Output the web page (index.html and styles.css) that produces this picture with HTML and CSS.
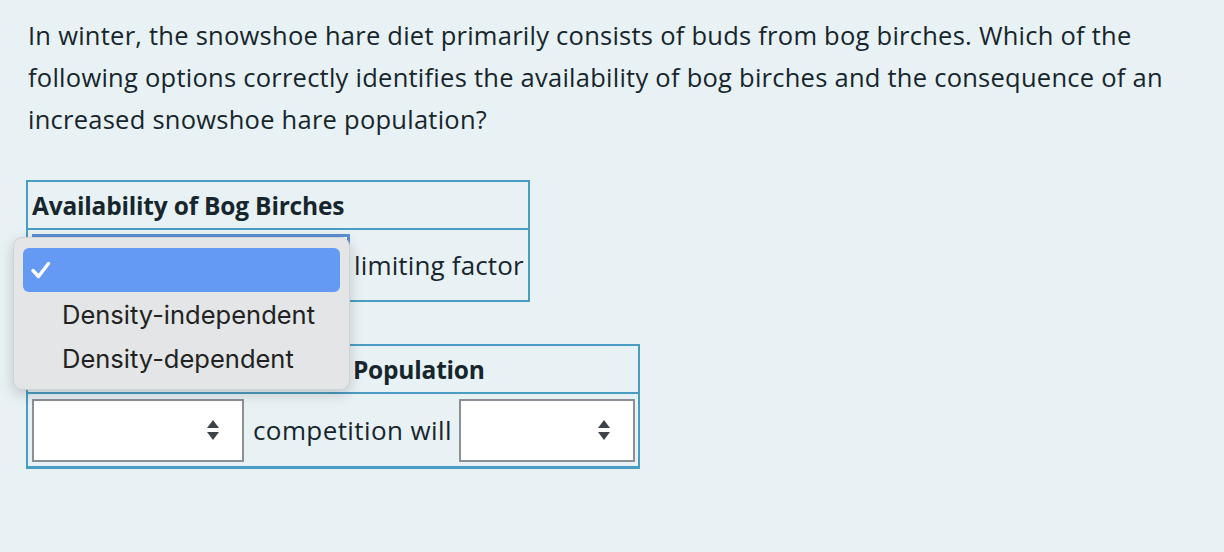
FILE: index.html
```html
<!DOCTYPE html>
<html lang="en">
<head>
<meta charset="utf-8">
<title>Snowshoe hare question</title>
<link rel="stylesheet" href="styles.css">
</head>
<body>
<main class="page">
  <p class="question">In winter, the snowshoe hare diet primarily consists of buds from bog birches. Which of the following options correctly identifies the availability of bog birches and the consequence of an increased snowshoe hare population?</p>

  <table class="grid grid-one">
    <tr class="head-row"><th>Availability of Bog Birches</th></tr>
    <tr class="body-row">
      <td>
        <div class="cell-flow">
          <div class="fake-select wide focused"></div>
          <span class="cell-text">limiting factor</span>
        </div>
      </td>
    </tr>
  </table>

  <table class="grid grid-two">
    <tr class="head-row"><th>Consequence of Increased Population</th></tr>
    <tr class="body-row tall">
      <td>
        <div class="cell-flow">
          <div class="fake-select narrow-a">
            <svg class="arrows" width="14" height="22" viewBox="0 0 14 22"><path d="M7 1 L13 9 L1 9 Z" fill="#3d4348"/><path d="M1 13 L13 13 L7 21 Z" fill="#3d4348"/></svg>
          </div>
          <span class="cell-text">competition will</span>
          <div class="fake-select narrow-b">
            <svg class="arrows" width="14" height="22" viewBox="0 0 14 22"><path d="M7 1 L13 9 L1 9 Z" fill="#3d4348"/><path d="M1 13 L13 13 L7 21 Z" fill="#3d4348"/></svg>
          </div>
        </div>
      </td>
    </tr>
  </table>

  <div class="menu">
    <div class="menu-item selected">
      <svg class="check" width="22" height="20" viewBox="0 0 22 20"><path d="M3 10.5 L8.5 16.5 L18.5 3.5" fill="none" stroke="#fff" stroke-width="3.4" stroke-linecap="round" stroke-linejoin="round"/></svg>
    </div>
    <div class="menu-item">Density-independent</div>
    <div class="menu-item">Density-dependent</div>
  </div>
</main>
</body>
</html>
```

FILE: styles.css
```css
html, body {
  margin: 0;
  padding: 0;
  background: #e8f1f4;
}

.page {
  position: relative;
  padding: 14px 28px 0 26px;
  font-family: "Open Sans", Lato, sans-serif;
  color: #17262d;
}

.question {
  margin: 0 0 40px 2px;
  font-size: 25.5px;
  letter-spacing: 0.25px;
  line-height: 42px;
  max-width: 1160px;
}

.grid {
  border-collapse: collapse;
  border: 2px solid #4a9dc2;
}

.grid th,
.grid td {
  border: 2px solid #4a9dc2;
  padding: 0 4px;
  text-align: left;
}

.grid th {
  height: 46px;
  font-size: 24.5px;
  font-weight: 700;
  letter-spacing: -0.2px;
  white-space: nowrap;
}

.grid-one {
  width: 504px;
  margin-bottom: 42px;
}

.grid-one .cell-text {
  letter-spacing: 0.15px;
}

.grid-one .cell-flow {
  gap: 4px;
}

.grid-two {
  width: 614px;
  border-bottom-width: 3px;
}

.grid-two .body-row td {
  border-bottom-width: 3px;
}

.body-row td {
  height: 70px;
  padding: 0 2px 0 4px;
}

.body-row.tall td {
  height: 72px;
}

.cell-flow {
  display: flex;
  align-items: center;
  gap: 5px;
}

.cell-text {
  font-size: 26px;
  letter-spacing: 0.4px;
  white-space: nowrap;
}

.fake-select {
  box-sizing: border-box;
  height: 63px;
  background: #fff;
  border: 2px solid #8b9096;
  display: flex;
  align-items: center;
  justify-content: flex-end;
  padding-right: 22px;
  flex-shrink: 0;
}

.fake-select.wide {
  width: 318px;
}

.fake-select.focused {
  border: 3px solid #5b8ed4;
  background: #fff;
}

.fake-select.narrow-a {
  width: 212px;
  margin-right: 4px;
}

.fake-select.narrow-b {
  width: 176px;
  margin-left: 2px;
}

.menu {
  position: absolute;
  left: 13px;
  top: 237px;
  width: 337px;
  height: 153px;
  box-sizing: border-box;
  padding: 10px 9px;
  background: #e3e5e6;
  border: 1px solid #cfd3d5;
  border-radius: 9px;
  box-shadow: 0 4px 14px rgba(0, 0, 0, 0.18);
  font-family: Inter, "Noto Sans", sans-serif;
  font-size: 25.5px;
  color: #222;
}

.menu-item {
  height: 44px;
  display: flex;
  align-items: center;
  padding-left: 39px;
  box-sizing: border-box;
}

.menu-item.selected {
  background: #6499f4;
  border-radius: 6px;
  padding-left: 7px;
}
```
